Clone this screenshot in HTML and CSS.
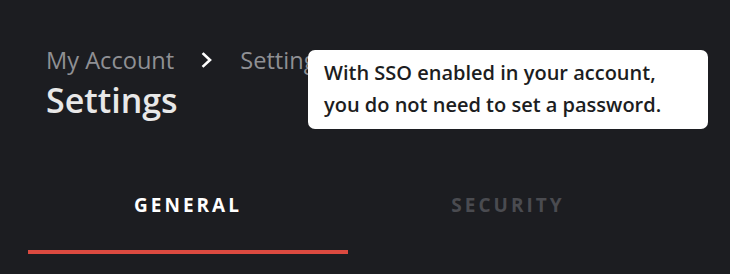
FILE: index.html
```html
<!DOCTYPE html>
<html>
<head>
<meta charset="utf-8">
<link rel="stylesheet" href="styles.css">
</head>
<body>
<div class="page">
  <header class="header">
    <nav class="crumbs">
      <span class="crumb">My Account</span>
      <svg class="chev" width="12" height="16" viewBox="0 0 12 16"><path d="M2.5 2 L9 8 L2.5 14" fill="none" stroke="#ffffff" stroke-width="2.6" stroke-linecap="square"/></svg>
      <span class="crumb">Settings</span>
    </nav>
    <h1 class="title">Settings</h1>
  </header>
  <div class="tabs">
    <div class="tab active">GENERAL</div>
    <div class="tab">SECURITY</div>
  </div>
  <div class="tooltip">With SSO enabled in your account,<br>you do not need to set a password.</div>
</div>
</body>
</html>
```
FILE: styles.css
```css
html, body {
  margin: 0;
  padding: 0;
  background: #1c1d21;
  font-family: "Open Sans", "Noto Sans", sans-serif;
}
.page {
  position: relative;
  width: 730px;
  height: 274px;
  overflow: hidden;
}
.header {
  padding: 43px 0 0 46px;
}
.crumbs {
  display: flex;
  align-items: center;
  height: 34px;
}
.crumb {
  font-size: 23.6px;
  color: #8f9094;
  line-height: 34px;
  white-space: nowrap;
}
.chev {
  flex: none;
  margin: 0 27px 0 27px;
}
.title {
  margin: 1px 0 0;
  font-size: 34px;
  font-weight: 600;
  color: #e8e8e8;
  line-height: 44px;
}
.tabs {
  display: flex;
  margin-top: 63px;
  padding-left: 28px;
}
.tab {
  width: 320px;
  height: 69px;
  box-sizing: border-box;
  text-align: center;
  font-size: 19px;
  font-weight: 700;
  letter-spacing: 3px;
  color: #4a4b50;
  padding-top: 8px;
  line-height: 24px;
  border-bottom: 4px solid transparent;
}
.tab.active {
  color: #ffffff;
  border-bottom-color: #db4a40;
}
.tooltip {
  position: absolute;
  left: 308px;
  top: 50px;
  width: 400px;
  height: 79px;
  box-sizing: border-box;
  padding: 7px 16px 8px;
  background: #ffffff;
  border-radius: 7px;
  color: #1c1d21;
  font-size: 20px;
  font-weight: 600;
  line-height: 32px;
  white-space: nowrap;
}
```
